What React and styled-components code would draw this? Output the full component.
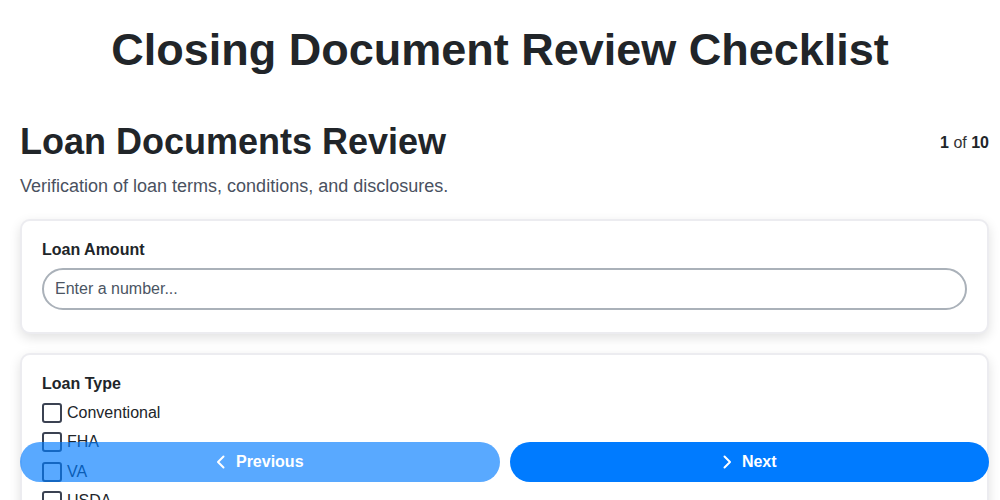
import React from 'react'
import styled, { createGlobalStyle } from 'styled-components'

const GlobalStyle = createGlobalStyle`
  * { box-sizing: border-box; }
  body {
    margin: 0;
    background: #fff;
    font-family: "Liberation Sans", Arial, sans-serif;
    color: #212529;
  }
`

const loanTypes = ['Conventional', 'FHA', 'VA', 'USDA', 'Jumbo']

const Chevron = ({ dir }) => (
  <svg width="10" height="14" viewBox="0 0 10 14" fill="none" stroke="currentColor"
    strokeWidth="2" strokeLinecap="round" strokeLinejoin="round">
    {dir === 'left'
      ? <polyline points="7.5,1.5 2,7 7.5,12.5" />
      : <polyline points="2.5,1.5 8,7 2.5,12.5" />}
  </svg>
)

const App = () => {
  return (
    <Page>
      <GlobalStyle />
      <Title>Closing Document Review Checklist</Title>
      <Content>
        <SectionHead>
          <SectionTitle>Loan Documents Review</SectionTitle>
          <Counter><b>1</b> of <b>10</b></Counter>
        </SectionHead>
        <Subtitle>Verification of loan terms, conditions, and disclosures.</Subtitle>

        <Card>
          <Label>Loan Amount</Label>
          <NumberInput type="text" placeholder="Enter a number..." />
        </Card>

        <Card>
          <Label $tight>Loan Type</Label>
          {loanTypes.map((t) => (
            <CheckRow key={t}>
              <Box />
              {t}
            </CheckRow>
          ))}
        </Card>
      </Content>

      <NavBar>
        <NavButton $faded>
          <Chevron dir="left" />
          Previous
        </NavButton>
        <NavButton>
          <Chevron dir="right" />
          Next
        </NavButton>
      </NavBar>
    </Page>
  )
}

const Page = styled.div`
  padding-top: 24px;
`

const Title = styled.h1`
  margin: 0 0 44px;
  text-align: center;
  font-size: 45px;
  font-weight: 700;
  line-height: 52px;
  color: #212529;
`

const Content = styled.div`
  padding: 0 11px 80px 20px;
`

const SectionHead = styled.div`
  display: flex;
  justify-content: space-between;
  align-items: flex-start;
`

const SectionTitle = styled.h2`
  margin: 0;
  font-size: 36px;
  line-height: 44px;
  font-weight: 700;
  color: #212529;
`

const Counter = styled.div`
  font-size: 16px;
  line-height: 20px;
  padding-top: 13px;
  color: #333;
  b { color: #212529; }
`

const Subtitle = styled.p`
  margin: 10px 0 21px;
  font-size: 18px;
  line-height: 24px;
  color: #4a5160;
`

const Card = styled.div`
  background: #fff;
  border: 2px solid #ececf0;
  border-radius: 10px;
  box-shadow: 0 4px 12px rgba(0, 0, 0, 0.12);
  padding: 19px 20px 22px;
  margin-bottom: 19px;
`

const Label = styled.div`
  font-size: 16px;
  font-weight: 700;
  line-height: 20px;
  margin-bottom: ${(p) => (p.$tight ? '4px' : '8px')};
  color: #212529;
`

const NumberInput = styled.input`
  display: block;
  width: 100%;
  height: 42px;
  border: 2px solid #aab1b9;
  border-radius: 21px;
  padding: 0 11px;
  font-family: inherit;
  font-size: 16px;
  color: #212529;
  outline: none;
  &::placeholder { color: #4b5563; }
`

const CheckRow = styled.label`
  display: flex;
  align-items: center;
  gap: 5px;
  height: 29.5px;
  font-size: 16px;
  color: #212529;
`

const Box = styled.span`
  width: 20px;
  height: 20px;
  border: 2px solid #3b4252;
  border-radius: 3px;
  background: #fff;
`

const NavBar = styled.div`
  position: fixed;
  left: 20px;
  right: 11px;
  bottom: 18px;
  display: flex;
  gap: 10px;
`

const NavButton = styled.button`
  flex: 1;
  height: 40px;
  border: none;
  border-radius: 20px;
  background: #007bff;
  opacity: ${(p) => (p.$faded ? 0.65 : 1)};
  color: #fff;
  font-family: inherit;
  font-size: 16px;
  font-weight: 700;
  display: flex;
  align-items: center;
  justify-content: center;
  gap: 10px;
  cursor: pointer;
`

export default App
